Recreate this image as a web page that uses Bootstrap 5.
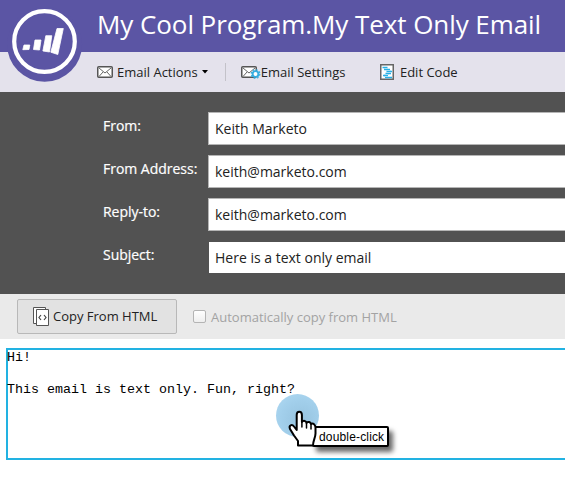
<!DOCTYPE html>
<html lang="en">
<head>
<meta charset="utf-8">
<meta name="viewport" content="width=device-width, initial-scale=1">
<title>My Cool Program.My Text Only Email</title>
<link href="https://cdn.jsdelivr.net/npm/bootstrap@5.3.0/dist/css/bootstrap.min.css" rel="stylesheet">
<style>
body{font-family:"Open Sans",sans-serif;font-size:13px;color:#222;background:#fff;overflow:hidden}
svg{display:block;flex:none}
.title-bar{height:52px;background:#5b55a4;padding-left:97px}
.title-bar h1{font-size:26px;line-height:36px;letter-spacing:-.07px;color:#fff;font-weight:400;white-space:nowrap;padding-top:6px}
.brand-logo{position:absolute;left:7px;top:7px;z-index:2}
.tools{height:40px;background:#e4e2ec;padding-left:97px}
.tool{color:#222;font-size:13px;line-height:20px;white-space:nowrap;padding:0;border:0;background:none}
.divider{width:1px;height:18px;background:#c3c2c9;margin:0 15px 0 17px}
.code-tool{margin-left:35px}
.code-tool span{margin-left:5.5px}
.fields{height:202px;background:#525252;padding:20px 0 0 103px;overflow:hidden}
.fields .line{height:33px;margin-bottom:10px}
.fields label{width:105px;flex:none;color:#fff;font-size:14px;letter-spacing:-.02px;line-height:20px;padding-top:4px;white-space:nowrap;-webkit-text-stroke:.2px #fff}
.fields .form-control{height:33px;border:1px solid #b5b5b5;border-right:0;border-radius:0;padding:0 6px 1px;font-size:14px;color:#222;background:#fff}
.fields .plain{border-color:#525252}
.copy-bar{height:45px;background:#eaeaea;padding-left:17px}
.copy-btn{width:160px;height:35px;border:1px solid #b8b8b8;background:#e2e2e2;border-radius:2px;font-size:13px;color:#222;padding:0 0 0 15px;white-space:nowrap}
.copy-btn span{margin-left:3px}
.auto-check{margin-left:16px;color:#a3a3a3}
.auto-check .form-check-input{width:13px;height:13px;margin:0;border:1px solid #b4b4b4;border-radius:2px;background:linear-gradient(#fff,#eee)}
.auto-check label{font-size:13px;line-height:20px;margin-left:5px;white-space:nowrap}
.editor{margin:9px 0 0 6px;height:112px;border:2px solid #22b2e2;border-right:0;font:13.33px/16px "Liberation Mono",monospace;color:#000}
.editor pre{font:inherit;margin:0 0 0 -1px;overflow:visible}
.pointer{position:absolute;left:270px;top:388px;z-index:2}
.halo{position:absolute;left:276px;top:394px;width:43px;height:43px;border-radius:50%;background:radial-gradient(circle at 58% 60%,#96c3df 0,#a2cfeb 55%,#b1daf3 100%)}
.hint{position:absolute;left:312px;top:426px;width:77px;height:21px;border:2px solid #000;border-radius:2px;background:#fff;font:12px/18px "Liberation Sans",sans-serif;letter-spacing:.16px;color:#000;padding-left:5px;box-shadow:4px 5px 5px rgba(0,0,0,.6);white-space:nowrap}
</style>
</head>
<body>
<header class="position-relative">
  <svg class="brand-logo" width="76" height="76" viewBox="7 7 76 76"><circle cx="44.6" cy="44.3" r="37.5" fill="#5b55a4"/><circle cx="44.5" cy="41.5" r="30.3" fill="none" stroke="#fff" stroke-width="4.2"/><g fill="#fff" stroke="#fff" stroke-width=".8" stroke-linejoin="round"><path d="M24 45h5.800l-.8 4.500-6.200.2z"/><path d="M35 40h6l-1.500 10-6-.5z"/><path d="M45.800 35.700h6l-2.300 16.300-6.600-1z"/><path d="M57 28.500h6.300l-5.500 26-7-2.300z"/></g></svg>
  <div class="title-bar"><h1 class="m-0">My Cool Program.My Text Only Email</h1></div>
  <nav class="tools d-flex align-items-center">
    <button class="tool d-flex align-items-center"><svg width="16" height="12"><rect x=".75" y=".75" width="14.500" height="10.500" rx="1" fill="#fff" stroke="#555" stroke-width="1.500"/><path d="M2 2l6 5 6-5M2 10.500l4-4.500M14 10.500l-4-4.500" fill="none" stroke="#666"/></svg><span class="ms-1">Email Actions</span><svg class="ms-1" width="6" height="4"><path d="M0 0h6L3 3.500z" fill="#000"/></svg></button>
    <span class="divider"></span>
    <button class="tool d-flex align-items-center"><svg width="20" height="16" viewBox="0 -2 20 16"><rect x=".75" y=".75" width="14.500" height="10.500" rx="1" fill="#fff" stroke="#555" stroke-width="1.500"/><path d="M2 2l6 5 6-5M2 10.500l4-4.500" fill="none" stroke="#666"/><circle cx="14.500" cy="8" r="2.900" fill="#fff" stroke="#35ade0" stroke-width="1.900"/><circle cx="14.500" cy="8" r="4.300" fill="none" stroke="#35ade0" stroke-width="1.200" stroke-dasharray="1.700 1.680"/></svg><span>Email Settings</span></button>
    <button class="tool code-tool d-flex align-items-center"><svg width="14" height="16"><path d="M.75.75h12.500v14.500H.75z" fill="#fff" stroke="#666" stroke-width="1.500"/><path d="M2.500 3.500h5M4 5.500h6M6.500 7.500H12M5.500 9.500H11M3 11.500h5M5 13.500h7" stroke="#28b0e6" stroke-width="1.300"/><path d="M5 4.500h3M7 6.500h4M7 8.500h4M4 10.500h5M4 12.500h4" stroke="#a5def5"/></svg><span>Edit Code</span></button>
  </nav>
</header>
<main>
  <form class="fields">
    <div class="line d-flex"><label for="f">From:</label><input id="f" class="form-control" value="Keith Marketo"></div>
    <div class="line d-flex"><label for="a">From Address:</label><input id="a" class="form-control" value="keith@marketo.com"></div>
    <div class="line d-flex"><label for="r">Reply-to:</label><input id="r" class="form-control" value="keith@marketo.com"></div>
    <div class="line d-flex"><label for="s">Subject:</label><input id="s" class="form-control plain" value="Here is a text only email"></div>
  </form>
  <div class="copy-bar d-flex align-items-center">
    <button class="copy-btn btn d-flex align-items-center"><svg width="17" height="20"><path d="M.5.500h12v16H.5z" fill="#fff" stroke="#555"/><path d="M3.500 2.500h12v16h-12z" fill="#fff" stroke="#555"/><path d="M8 8l-2 2.500L8 13M11 8l2 2.500-2 2.500" fill="none" stroke="#444" stroke-width="1.200"/></svg><span>Copy From HTML</span></button>
    <div class="auto-check d-flex align-items-center"><input class="form-check-input" type="checkbox" id="c"><label for="c">Automatically copy from HTML</label></div>
  </div>
  <div class="editor"><pre>Hi!

This email is text only. Fun, right?</pre></div>
</main>
<div class="halo"></div>
<div class="hint">double-click</div>
<svg class="pointer" width="60" height="64" viewBox="270 388 60 64"><path d="M298 445.500v-4.500l-4-5.500-4-6.500c-1.500-4 2-5 4-2.500l2.700 3.500v-15c0-4.300 5.200-4.300 5.200 0v7c1.500-2 4.300-1.200 4.600.8 1.500-1.700 4.200-.8 4.500 1.200 2.300-1.200 4.300.5 4.500 3.500v6c0 4-2.500 7-2.500 12z" fill="#fff" stroke="#000" stroke-width="2" stroke-linejoin="round"/><path d="M301.900 421v6M306.500 423v5M311 425v4" stroke="#000" stroke-width="1.500" stroke-linecap="round"/></svg>
</body>
</html>
